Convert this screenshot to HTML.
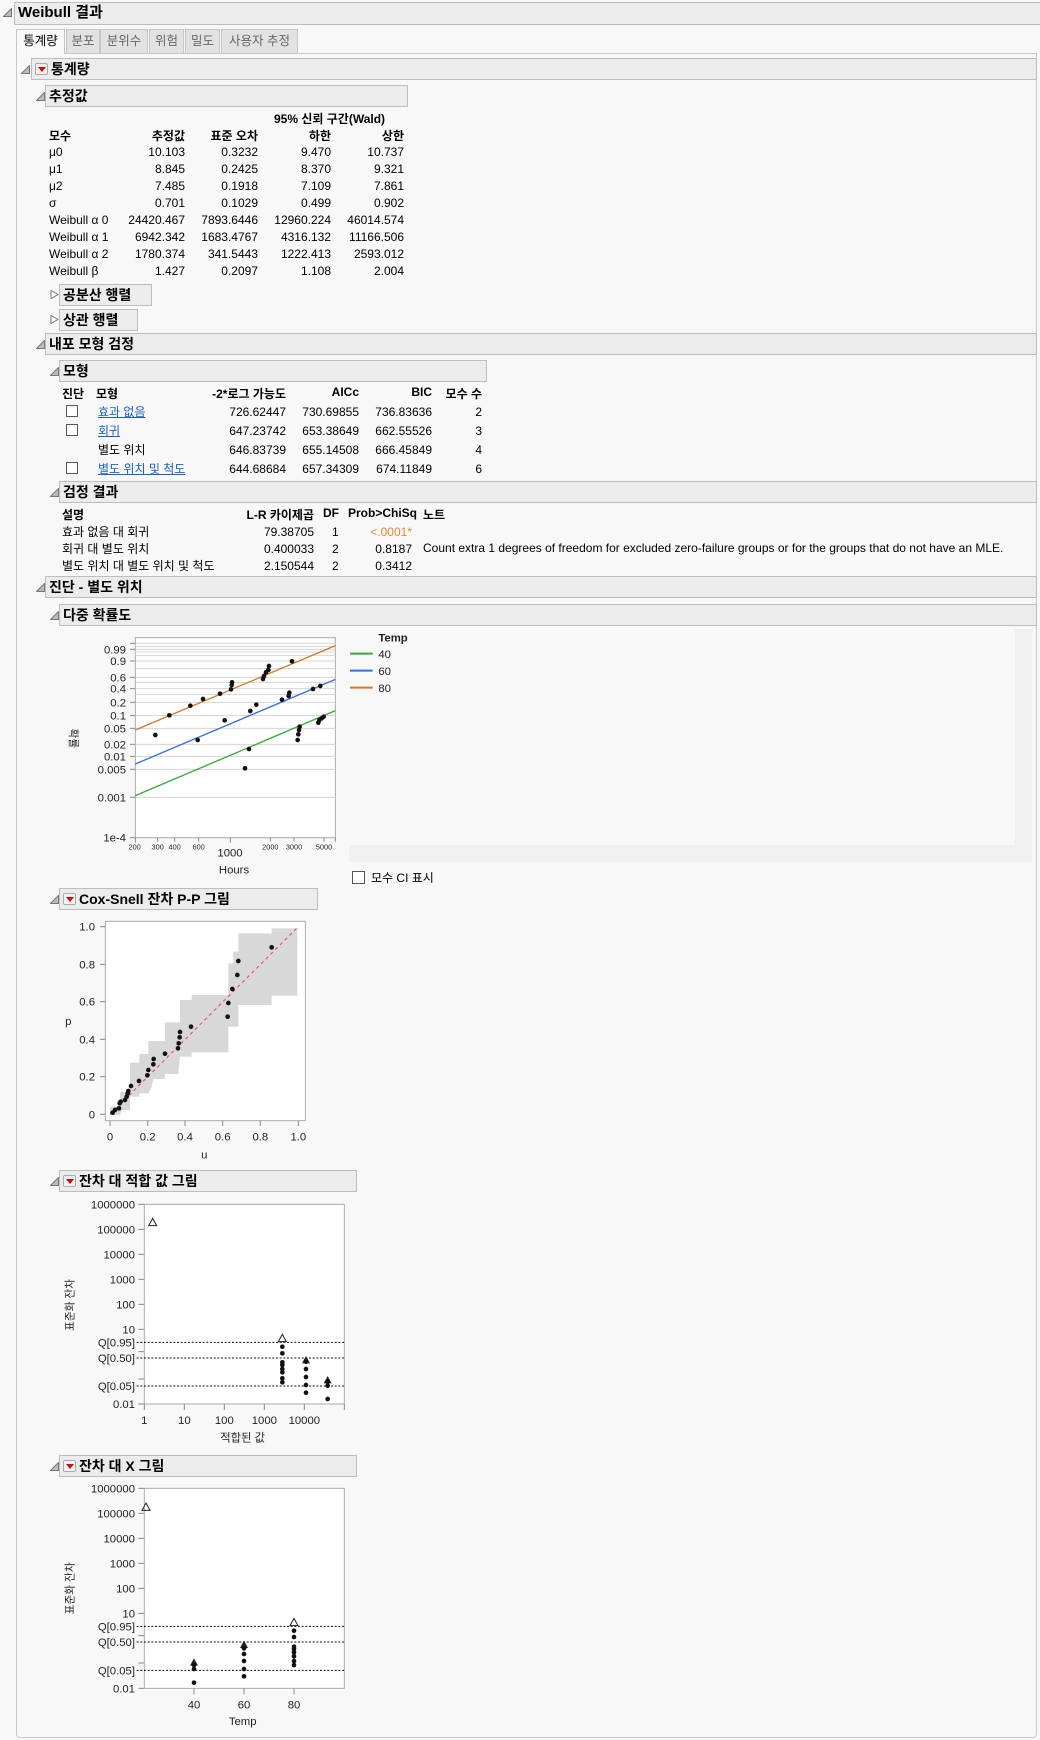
<!DOCTYPE html>
<html><head><meta charset="utf-8"><style>
*{margin:0;padding:0;box-sizing:border-box}
body{width:1040px;height:1740px;background:#f8f8f8;position:relative;overflow:hidden;font-family:"Liberation Sans","Noto Sans CJK KR",sans-serif;color:#000}
.a{position:absolute;white-space:nowrap}
.bar{position:absolute;background:#ececec;border:1px solid #bdbdbd;height:22px;font-weight:bold;font-size:14px;line-height:20px;padding-left:3px}
.tri{position:absolute;width:9px;height:9px}
.dd{display:inline-block;width:13px;height:12px;border:1px solid #aaa;border-radius:2px;background:#f4f4f4;vertical-align:-1px;margin-right:3px;position:relative}
.dd:after{content:"";position:absolute;left:2px;top:3px;border-left:4px solid transparent;border-right:4px solid transparent;border-top:5px solid #d00}
.t{font-size:12px;position:absolute;white-space:nowrap}
.r{text-align:right}
.tab{position:absolute;top:29px;height:24px;background:#e2e2e2;border:1px solid #c6c6c6;border-bottom:none;font-size:12.5px;color:#666;line-height:22px;text-align:center}
.lnk{color:#1a5fc8;text-decoration:underline}
.cb{position:absolute;width:12px;height:12px;border:1px solid #555;background:#fff}
</style></head><body>
<svg width="0" height="0" style="position:absolute"><defs><symbol id="tr" viewBox="0 0 9 9"><path d="M8.5 0.5 L8.5 8.5 L0.5 8.5 Z" fill="#bbb" stroke="#777" stroke-width="1"/></symbol><symbol id="tc" viewBox="0 0 9 9"><path d="M1 0.5 L8 4.5 L1 8.5 Z" fill="#fff" stroke="#777" stroke-width="1"/></symbol></defs></svg>

<div class="a" style="left:16px;top:53px;width:1021px;height:1685px;border:1px solid #c8c8c8;border-radius:0 0 4px 4px"></div>

<svg class="tri" style="left:3px;top:8px"><use href="#tr"/></svg>
<div class="bar" style="left:14px;top:2px;width:1030px;height:23px;font-size:15px">Weibull 결과</div>

<div class="tab" style="left:16px;width:49px;background:#f8f8f8;color:#000;height:25px">통계량</div>
<div class="tab" style="left:66px;width:34px">분포</div>
<div class="tab" style="left:100px;width:48px">분위수</div>
<div class="tab" style="left:149px;width:35px">위험</div>
<div class="tab" style="left:185px;width:35px">밀도</div>
<div class="tab" style="left:221px;width:77px">사용자 추정</div>

<svg class="tri" style="left:21px;top:65px"><use href="#tr"/></svg>
<div class="bar" style="left:31px;top:58px;width:1006px"><span class="dd"></span>통계량</div>

<svg class="tri" style="left:36px;top:92px"><use href="#tr"/></svg>
<div class="bar" style="left:45px;top:85px;width:363px">추정값</div>

<div class="t" style="left:274px;top:110px;font-weight:bold">95% 신뢰 구간(Wald)</div>
<div class="t" style="left:49px;top:127px;font-weight:bold">모수</div>
<div class="t r" style="left:120px;width:65px;top:127px;font-weight:bold">추정값</div>
<div class="t r" style="left:190px;width:68px;top:127px;font-weight:bold">표준 오차</div>
<div class="t r" style="left:270px;width:61px;top:127px;font-weight:bold">하한</div>
<div class="t r" style="left:340px;width:64px;top:127px;font-weight:bold">상한</div>
<div class="t" style="left:49px;top:144px;line-height:17px">μ0<br>μ1<br>μ2<br>σ<br>Weibull α 0<br>Weibull α 1<br>Weibull α 2<br>Weibull β</div>
<div class="t r" style="left:120px;width:65px;top:144px;line-height:17px">10.103<br>8.845<br>7.485<br>0.701<br>24420.467<br>6942.342<br>1780.374<br>1.427</div>
<div class="t r" style="left:190px;width:68px;top:144px;line-height:17px">0.3232<br>0.2425<br>0.1918<br>0.1029<br>7893.6446<br>1683.4767<br>341.5443<br>0.2097</div>
<div class="t r" style="left:260px;width:71px;top:144px;line-height:17px">9.470<br>8.370<br>7.109<br>0.499<br>12960.224<br>4316.132<br>1222.413<br>1.108</div>
<div class="t r" style="left:330px;width:74px;top:144px;line-height:17px">10.737<br>9.321<br>7.861<br>0.902<br>46014.574<br>11166.506<br>2593.012<br>2.004</div>

<svg class="tri" style="left:50px;top:290px"><use href="#tc"/></svg>
<div class="bar" style="left:59px;top:284px;width:93px">공분산 행렬</div>
<svg class="tri" style="left:50px;top:315px"><use href="#tc"/></svg>
<div class="bar" style="left:59px;top:309px;width:79px">상관 행렬</div>

<svg class="tri" style="left:36px;top:340px"><use href="#tr"/></svg>
<div class="bar" style="left:45px;top:333px;width:992px">내포 모형 검정</div>
<svg class="tri" style="left:50px;top:367px"><use href="#tr"/></svg>
<div class="bar" style="left:59px;top:360px;width:428px">모형</div>

<div class="t" style="left:62px;top:385px;font-weight:bold">진단</div>
<div class="t" style="left:96px;top:385px;font-weight:bold">모형</div>
<div class="t r" style="left:190px;width:96px;top:385px;font-weight:bold">-2*로그 가능도</div>
<div class="t r" style="left:300px;width:59px;top:385px;font-weight:bold">AICc</div>
<div class="t r" style="left:370px;width:62px;top:385px;font-weight:bold">BIC</div>
<div class="t r" style="left:432px;width:50px;top:385px;font-weight:bold">모수 수</div>
<div class="cb" style="left:66px;top:405px"></div>
<div class="cb" style="left:66px;top:424px"></div>
<div class="cb" style="left:66px;top:462px"></div>
<div class="t" style="left:98px;top:403px"><span class="lnk">효과 없음</span></div>
<div class="t" style="left:98px;top:422px"><span class="lnk">회귀</span></div>
<div class="t" style="left:98px;top:441px">별도 위치</div>
<div class="t" style="left:98px;top:460px"><span class="lnk">별도 위치 및 척도</span></div>
<div class="t r" style="left:200px;width:86px;top:403px;line-height:19px">726.62447<br>647.23742<br>646.83739<br>644.68684</div>
<div class="t r" style="left:290px;width:69px;top:403px;line-height:19px">730.69855<br>653.38649<br>655.14508<br>657.34309</div>
<div class="t r" style="left:362px;width:70px;top:403px;line-height:19px">736.83636<br>662.55526<br>666.45849<br>674.11849</div>
<div class="t r" style="left:440px;width:42px;top:403px;line-height:19px">2<br>3<br>4<br>6</div>

<svg class="tri" style="left:50px;top:488px"><use href="#tr"/></svg>
<div class="bar" style="left:59px;top:481px;width:978px">검정 결과</div>
<div class="t" style="left:62px;top:506px;font-weight:bold">설명</div>
<div class="t r" style="left:220px;width:94px;top:506px;font-weight:bold">L-R 카이제곱</div>
<div class="t" style="left:323px;top:506px;font-weight:bold">DF</div>
<div class="t" style="left:348px;top:506px;font-weight:bold">Prob&gt;ChiSq</div>
<div class="t" style="left:423px;top:506px;font-weight:bold">노트</div>
<div class="t" style="left:62px;top:524px;line-height:17px">효과 없음 대 회귀<br>회귀 대 별도 위치<br>별도 위치 대 별도 위치 및 척도</div>
<div class="t r" style="left:240px;width:74px;top:524px;line-height:17px">79.38705<br>0.400033<br>2.150544</div>
<div class="t" style="left:332px;top:524px;line-height:17px">1<br>2<br>2</div>
<div class="t r" style="left:360px;width:52px;top:524px;line-height:17px"><span style="color:#e8883a">&lt;.0001*</span><br>0.8187<br>0.3412</div>
<div class="t" style="left:423px;top:541px">Count extra 1 degrees of freedom for excluded zero-failure groups or for the groups that do not have an MLE.</div>

<svg class="tri" style="left:36px;top:583px"><use href="#tr"/></svg>
<div class="bar" style="left:45px;top:576px;width:992px">진단 - 별도 위치</div>

<svg class="a" style="left:50px;top:590px" width="480" height="300" viewBox="0 0 1440 900" font-family="Liberation Sans, Noto Sans CJK KR, sans-serif">
<rect x="256" y="143" width="600" height="600" fill="#fff" stroke="#aaa" stroke-width="3"/>
<g stroke="#d4d4d4" stroke-width="3">
<line x1="256" x2="856" y1="160" y2="160"/><line x1="256" x2="856" y1="170" y2="170"/><line x1="256" x2="856" y1="178" y2="178"/><line x1="256" x2="856" y1="186" y2="186"/><line x1="256" x2="856" y1="196" y2="196"/><line x1="256" x2="856" y1="213" y2="213"/><line x1="256" x2="856" y1="236" y2="236"/><line x1="256" x2="856" y1="262" y2="262"/><line x1="256" x2="856" y1="277" y2="277"/><line x1="256" x2="856" y1="296" y2="296"/><line x1="256" x2="856" y1="313" y2="313"/><line x1="256" x2="856" y1="337" y2="337"/><line x1="256" x2="856" y1="377" y2="377"/><line x1="256" x2="856" y1="415" y2="415"/><line x1="256" x2="856" y1="463" y2="463"/><line x1="256" x2="856" y1="499" y2="499"/><line x1="256" x2="856" y1="538" y2="538"/><line x1="256" x2="856" y1="622" y2="622"/>
</g>
<g stroke="#888" stroke-width="3">
<line x1="240" x2="256" y1="160" y2="160"/><line x1="240" x2="256" y1="178" y2="178"/><line x1="240" x2="256" y1="213" y2="213"/><line x1="240" x2="256" y1="262" y2="262"/><line x1="240" x2="256" y1="296" y2="296"/><line x1="240" x2="256" y1="337" y2="337"/><line x1="240" x2="256" y1="377" y2="377"/><line x1="240" x2="256" y1="415" y2="415"/><line x1="240" x2="256" y1="463" y2="463"/><line x1="240" x2="256" y1="499" y2="499"/><line x1="240" x2="256" y1="538" y2="538"/><line x1="240" x2="256" y1="622" y2="622"/><line x1="240" x2="256" y1="743" y2="743"/>
<line x1="256" x2="256" y1="743" y2="758"/><line x1="323" x2="323" y1="743" y2="755"/><line x1="374" x2="374" y1="743" y2="755"/><line x1="446" x2="446" y1="743" y2="755"/><line x1="541" x2="541" y1="743" y2="758"/><line x1="661" x2="661" y1="743" y2="755"/><line x1="732" x2="732" y1="743" y2="755"/><line x1="822" x2="822" y1="743" y2="755"/><line x1="856" x2="856" y1="743" y2="755"/>
</g>
<g font-size="34" fill="#222" text-anchor="end">
<text x="228" y="190">0.99</text><text x="228" y="225">0.9</text><text x="228" y="274">0.6</text><text x="228" y="308">0.4</text><text x="228" y="349">0.2</text><text x="228" y="389">0.1</text><text x="228" y="427">0.05</text><text x="228" y="475">0.02</text><text x="228" y="511">0.01</text><text x="228" y="550">0.005</text><text x="228" y="634">0.001</text><text x="228" y="755">1e-4</text>
</g>
<g font-size="22" fill="#222" text-anchor="middle">
<text x="254" y="778">200</text><text x="323" y="778">300</text><text x="374" y="778">400</text><text x="446" y="778">600</text><text x="661" y="778">2000</text><text x="732" y="778">3000</text><text x="822" y="778">5000</text>
</g>
<text x="540" y="800" font-size="34" text-anchor="middle" fill="#222">1000</text>
<text x="552" y="850" font-size="34" text-anchor="middle" fill="#222">Hours</text>
<text transform="translate(60,445) rotate(90)" font-size="32" text-anchor="middle" fill="#222">확률</text>
<line x1="256" y1="420" x2="856" y2="167" stroke="#d4782a" stroke-width="4"/>
<line x1="256" y1="522" x2="856" y2="268" stroke="#3a6ee0" stroke-width="4"/>
<line x1="256" y1="617" x2="856" y2="362" stroke="#3aa83a" stroke-width="4"/>
<g fill="#111">
<circle cx="316" cy="435" r="7"/><circle cx="358" cy="376" r="7"/><circle cx="421" cy="347" r="7"/><circle cx="459" cy="327" r="7"/><circle cx="510" cy="311" r="7"/><circle cx="543" cy="298" r="7"/><circle cx="545" cy="285" r="7"/><circle cx="546" cy="277" r="7"/><circle cx="639" cy="267" r="7"/><circle cx="642" cy="258" r="7"/><circle cx="648" cy="247" r="7"/><circle cx="655" cy="240" r="7"/><circle cx="657" cy="228" r="7"/><circle cx="726" cy="214" r="7"/>
<circle cx="443" cy="450" r="7"/><circle cx="524" cy="391" r="7"/><circle cx="601" cy="363" r="7"/><circle cx="619" cy="344" r="7"/><circle cx="696" cy="329" r="7"/><circle cx="716" cy="318" r="7"/><circle cx="718" cy="308" r="7"/><circle cx="789" cy="297" r="7"/><circle cx="811" cy="288" r="7"/>
<circle cx="585" cy="535" r="7"/><circle cx="597" cy="477" r="7"/><circle cx="743" cy="450" r="7"/><circle cx="745" cy="433" r="7"/><circle cx="747" cy="420" r="7"/><circle cx="749" cy="410" r="7"/><circle cx="805" cy="398" r="7"/><circle cx="808" cy="390" r="7"/><circle cx="815" cy="385" r="7"/><circle cx="821" cy="380" r="7"/>
</g>
<text x="985" y="155" font-size="34" font-weight="bold" fill="#222">Temp</text>
<line x1="900" x2="968" y1="191" y2="191" stroke="#3aa83a" stroke-width="6"/>
<line x1="900" x2="968" y1="242" y2="242" stroke="#3a6ee0" stroke-width="6"/>
<line x1="900" x2="968" y1="293" y2="293" stroke="#d4782a" stroke-width="6"/>
<g font-size="34" fill="#222"><text x="985" y="204">40</text><text x="985" y="255">60</text><text x="985" y="306">80</text></g>
</svg>
<svg class="tri" style="left:50px;top:611px"><use href="#tr"/></svg>
<div class="bar" style="left:59px;top:604px;width:978px">다중 확률도</div>
<div class="a" style="left:349px;top:845px;width:683px;height:17px;background:#f0f0f0"></div>
<div class="a" style="left:1015px;top:629px;width:17px;height:233px;background:#f0f0f0"></div>
<div class="cb" style="left:352px;top:871px;width:13px;height:13px"></div>
<div class="t" style="left:371px;top:869px">모수 CI 표시</div>

<svg class="a" style="left:50px;top:880px" width="320" height="290" viewBox="0 0 960 870" font-family="Liberation Sans, Noto Sans CJK KR, sans-serif">
<rect x="166" y="124" width="600" height="598" fill="#fff" stroke="#aaa" stroke-width="3"/>
<path d="M180 680 L210 680 L210 636 L240 636 L240 548 L268 548 L268 522 L295 522 L295 483 L345 483 L345 427 L390 427 L390 360 L425 360 L425 345 L535 345 L535 250 L550 250 L550 215 L565 215 L565 160 L665 160 L665 145 L742 145 L742 347 L665 347 L665 375 L565 375 L565 440 L535 440 L535 517 L425 517 L425 530 L390 530 L385 582 L345 582 L345 597 L310 597 L305 620 L295 640 L268 640 L268 650 L240 650 L240 690 L215 690 L210 705 L180 705 Z" fill="#d8d8d8"/>
<line x1="180" y1="703" x2="745" y2="140" stroke="#e8405a" stroke-width="3" stroke-dasharray="10,10"/>
<g stroke="#888" stroke-width="3">
<line x1="150" x2="166" y1="140" y2="140"/><line x1="150" x2="166" y1="253" y2="253"/><line x1="150" x2="166" y1="365" y2="365"/><line x1="150" x2="166" y1="478" y2="478"/><line x1="150" x2="166" y1="590" y2="590"/><line x1="150" x2="166" y1="703" y2="703"/>
<line x1="180" x2="180" y1="722" y2="738"/><line x1="293" x2="293" y1="722" y2="738"/><line x1="405" x2="405" y1="722" y2="738"/><line x1="518" x2="518" y1="722" y2="738"/><line x1="631" x2="631" y1="722" y2="738"/><line x1="745" x2="745" y1="722" y2="738"/>
</g>
<g font-size="34" fill="#222" text-anchor="end">
<text x="135" y="152">1.0</text><text x="135" y="265">0.8</text><text x="135" y="377">0.6</text><text x="135" y="490">0.4</text><text x="135" y="602">0.2</text><text x="135" y="715">0</text>
</g>
<g font-size="34" fill="#222" text-anchor="middle">
<text x="180" y="782">0</text><text x="293" y="782">0.2</text><text x="405" y="782">0.4</text><text x="518" y="782">0.6</text><text x="631" y="782">0.8</text><text x="745" y="782">1.0</text>
<text x="463" y="835">u</text><text x="55" y="435">p</text>
</g>
<g fill="#111">
<circle cx="188" cy="698" r="7"/><circle cx="195" cy="690" r="7"/><circle cx="207" cy="685" r="7"/><circle cx="209" cy="670" r="7"/><circle cx="212" cy="665" r="7"/><circle cx="225" cy="660" r="7"/><circle cx="230" cy="650" r="7"/><circle cx="233" cy="640" r="7"/><circle cx="235" cy="633" r="7"/><circle cx="243" cy="618" r="7"/><circle cx="267" cy="603" r="7"/><circle cx="292" cy="586" r="7"/><circle cx="295" cy="570" r="7"/><circle cx="310" cy="553" r="7"/><circle cx="311" cy="537" r="7"/><circle cx="345" cy="521" r="7"/><circle cx="384" cy="505" r="7"/><circle cx="386" cy="490" r="7"/><circle cx="389" cy="472" r="7"/><circle cx="390" cy="456" r="7"/><circle cx="423" cy="440" r="7"/><circle cx="533" cy="410" r="7"/><circle cx="535" cy="369" r="7"/><circle cx="547" cy="327" r="7"/><circle cx="562" cy="285" r="7"/><circle cx="565" cy="243" r="7"/><circle cx="665" cy="202" r="7"/>
</g>
</svg>
<svg class="tri" style="left:50px;top:895px"><use href="#tr"/></svg>
<div class="bar" style="left:59px;top:888px;width:259px"><span class="dd"></span>Cox-Snell 잔차 P-P 그림</div>

<svg class="a" style="left:50px;top:1165px" width="320" height="290" viewBox="0 0 960 870" font-family="Liberation Sans, Noto Sans CJK KR, sans-serif">
<rect x="283" y="118" width="600" height="599" fill="#fff" stroke="#aaa" stroke-width="3"/>
<g stroke="#111" stroke-width="3" stroke-dasharray="6,5"><line x1="260" x2="883" y1="532" y2="532"/><line x1="260" x2="883" y1="579" y2="579"/><line x1="260" x2="883" y1="663" y2="663"/></g>
<g stroke="#888" stroke-width="3">
<line x1="265" x2="283" y1="118" y2="118"/><line x1="265" x2="283" y1="193" y2="193"/><line x1="265" x2="283" y1="268" y2="268"/><line x1="265" x2="283" y1="343" y2="343"/><line x1="265" x2="283" y1="418" y2="418"/><line x1="265" x2="283" y1="493" y2="493"/><line x1="265" x2="283" y1="560" y2="560"/><line x1="265" x2="283" y1="642" y2="642"/><line x1="265" x2="283" y1="717" y2="717"/>
<line x1="283" x2="283" y1="717" y2="735"/><line x1="403" x2="403" y1="717" y2="735"/><line x1="523" x2="523" y1="717" y2="735"/><line x1="643" x2="643" y1="717" y2="735"/><line x1="763" x2="763" y1="717" y2="735"/><line x1="883" x2="883" y1="717" y2="735"/>
</g>
<g font-size="34" fill="#222" text-anchor="end">
<text x="255" y="130">1000000</text><text x="255" y="205">100000</text><text x="255" y="280">10000</text><text x="255" y="355">1000</text><text x="255" y="430">100</text><text x="255" y="505">10</text><text x="255" y="544">Q[0.95]</text><text x="255" y="591">Q[0.50]</text><text x="255" y="675">Q[0.05]</text><text x="255" y="729">0.01</text>
</g>
<g font-size="34" fill="#222" text-anchor="middle">
<text x="283" y="777">1</text><text x="403" y="777">10</text><text x="523" y="777">100</text><text x="643" y="777">1000</text><text x="763" y="777">10000</text>
<text x="578" y="830">적합된 값</text>
</g>
<text transform="translate(70,420) rotate(-90)" font-size="32" text-anchor="middle" fill="#222">표준화 잔차</text>
<path d="M308 160 L320 182 L296 182 Z" fill="none" stroke="#222" stroke-width="3"/>
<path d="M697 508 L709 530 L685 530 Z" fill="none" stroke="#222" stroke-width="3"/>
<path d="M768 573 L780 595 L756 595 Z" fill="#222"/>
<path d="M833 633 L845 655 L821 655 Z" fill="#222"/>
<g fill="#111">
<circle cx="697" cy="545" r="7"/><circle cx="697" cy="565" r="7"/><circle cx="697" cy="592" r="7"/><circle cx="697" cy="600" r="7"/><circle cx="697" cy="612" r="7"/><circle cx="697" cy="622" r="7"/><circle cx="697" cy="640" r="7"/><circle cx="697" cy="652" r="7"/>
<circle cx="768" cy="590" r="7"/><circle cx="768" cy="612" r="7"/><circle cx="768" cy="636" r="7"/><circle cx="768" cy="660" r="7"/><circle cx="768" cy="683" r="7"/>
<circle cx="833" cy="650" r="7"/><circle cx="833" cy="662" r="7"/><circle cx="833" cy="702" r="7"/>
</g>
</svg>
<svg class="tri" style="left:50px;top:1177px"><use href="#tr"/></svg>
<div class="bar" style="left:59px;top:1170px;width:298px"><span class="dd"></span>잔차 대 적합 값 그림</div>

<svg class="a" style="left:50px;top:1445px" width="320" height="295" viewBox="0 0 960 885" font-family="Liberation Sans, Noto Sans CJK KR, sans-serif">
<rect x="283" y="130" width="600" height="600" fill="#fff" stroke="#aaa" stroke-width="3"/>
<g stroke="#111" stroke-width="3" stroke-dasharray="6,5"><line x1="260" x2="883" y1="544" y2="544"/><line x1="260" x2="883" y1="591" y2="591"/><line x1="260" x2="883" y1="676" y2="676"/></g>
<g stroke="#888" stroke-width="3">
<line x1="265" x2="283" y1="130" y2="130"/><line x1="265" x2="283" y1="205" y2="205"/><line x1="265" x2="283" y1="280" y2="280"/><line x1="265" x2="283" y1="355" y2="355"/><line x1="265" x2="283" y1="430" y2="430"/><line x1="265" x2="283" y1="505" y2="505"/><line x1="265" x2="283" y1="572" y2="572"/><line x1="265" x2="283" y1="654" y2="654"/><line x1="265" x2="283" y1="730" y2="730"/>
<line x1="432" x2="432" y1="730" y2="748"/><line x1="582" x2="582" y1="730" y2="748"/><line x1="732" x2="732" y1="730" y2="748"/>
</g>
<g font-size="34" fill="#222" text-anchor="end">
<text x="255" y="142">1000000</text><text x="255" y="217">100000</text><text x="255" y="292">10000</text><text x="255" y="367">1000</text><text x="255" y="442">100</text><text x="255" y="517">10</text><text x="255" y="556">Q[0.95]</text><text x="255" y="603">Q[0.50]</text><text x="255" y="688">Q[0.05]</text><text x="255" y="742">0.01</text>
</g>
<g font-size="34" fill="#222" text-anchor="middle">
<text x="432" y="790">40</text><text x="582" y="790">60</text><text x="732" y="790">80</text><text x="578" y="840">Temp</text>
</g>
<text transform="translate(70,430) rotate(-90)" font-size="32" text-anchor="middle" fill="#222">표준화 잔차</text>
<path d="M288 174 L300 196 L276 196 Z" fill="none" stroke="#222" stroke-width="3"/>
<path d="M732 520 L744 542 L720 542 Z" fill="none" stroke="#222" stroke-width="3"/>
<path d="M432 640 L444 662 L420 662 Z" fill="#222"/>
<path d="M582 587 L594 609 L570 609 Z" fill="#222"/>
<g fill="#111">
<circle cx="432" cy="660" r="7"/><circle cx="432" cy="672" r="7"/><circle cx="432" cy="713" r="7"/>
<circle cx="582" cy="610" r="7"/><circle cx="582" cy="627" r="7"/><circle cx="582" cy="648" r="7"/><circle cx="582" cy="672" r="7"/><circle cx="582" cy="694" r="7"/>
<circle cx="732" cy="557" r="7"/><circle cx="732" cy="576" r="7"/><circle cx="732" cy="605" r="7"/><circle cx="732" cy="612" r="7"/><circle cx="732" cy="622" r="7"/><circle cx="732" cy="634" r="7"/><circle cx="732" cy="648" r="7"/><circle cx="732" cy="660" r="7"/>
</g>
</svg>
<svg class="tri" style="left:50px;top:1462px"><use href="#tr"/></svg>
<div class="bar" style="left:59px;top:1455px;width:298px"><span class="dd"></span>잔차 대 X 그림</div>
</body></html>
